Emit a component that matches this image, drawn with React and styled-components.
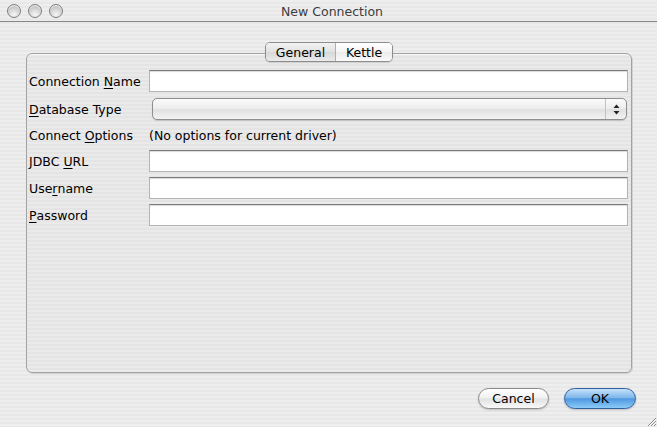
import React from 'react';
import styled, { createGlobalStyle } from 'styled-components';

const GlobalStyle = createGlobalStyle`
  html, body {
    margin: 0;
    padding: 0;
  }
  body {
    font-family: "DejaVu Sans", "Liberation Sans", sans-serif;
    font-size: 12.5px;
  }
`;

const stripes = (a, b) =>
  `repeating-linear-gradient(to bottom, ${a} 0px, ${a} 2px, ${b} 2px, ${b} 4px)`;

const Window = styled.div`
  width: 657px;
  height: 427px;
  display: flex;
  flex-direction: column;
  background: ${stripes('#eeeeee', '#e8e8e8')};
  overflow: hidden;
  position: relative;
`;

const TitleBar = styled.div`
  height: 21px;
  border-bottom: 1px solid #868686;
  display: flex;
  align-items: center;
  padding-left: 7px;
  gap: 7px;
`;

const Light = styled.span`
  width: 14px;
  height: 14px;
  border-radius: 50%;
  box-sizing: border-box;
  border: 1px solid #7f7f7f;
  background: radial-gradient(circle at 50% 80%, #f6f6f6 0%, #d4d4d4 50%, #a9a9a9 100%);
  box-shadow: inset 0 1px 1px rgba(255, 255, 255, 0.9);
`;

const Title = styled.div`
  flex: 1;
  text-align: center;
  color: #3d3d3d;
  margin-left: -63px;
  font-size: 12.5px;
  line-height: 21px;
  padding-top: 1px;
`;

const Body = styled.div`
  flex: 1;
  display: flex;
  flex-direction: column;
  padding: 20px 25px 0 26px;
`;

const TabBar = styled.div`
  display: flex;
  justify-content: center;
  margin-bottom: -9px;
  position: relative;
  z-index: 1;
`;

const Segments = styled.div`
  display: flex;
  height: 20px;
  box-sizing: border-box;
  border: 1px solid #8d8d8d;
  border-radius: 5px;
  overflow: hidden;
  box-shadow: 0 1px 1px rgba(0, 0, 0, 0.12);
`;

const Segment = styled.div`
  width: ${p => p.$w}px;
  display: flex;
  align-items: center;
  justify-content: center;
  color: #000;
  font-size: 12.5px;
  background: ${p => p.$selected
    ? 'linear-gradient(to bottom, #f2f2f2 0%, #e2e2e2 50%, #d8d8d8 51%, #eaeaea 100%)'
    : 'linear-gradient(to bottom, #ffffff 0%, #f4f4f4 50%, #ebebeb 51%, #fafafa 100%)'};
  border-left: ${p => (p.$first ? 'none' : '1px solid #b0b0b0')};
`;

const Panel = styled.div`
  height: 320px;
  box-sizing: border-box;
  border: 1px solid #a2a2a2;
  border-radius: 6px;
  box-shadow: 1px 1px 0 #d2d2d2, inset 0 1px 0 #f6f6f6;
  background: ${stripes('#eaeaea', '#e4e4e4')};
  padding: 16px 2px 0 2px;
`;

const Form = styled.div`
  display: grid;
  grid-template-columns: 120px 1fr;
  row-gap: 5px;
  grid-template-rows: 23px 22px 20px 22px 22px 22px;
`;

const Label = styled.div`
  display: flex;
  align-items: center;
  color: #000;
  white-space: nowrap;
`;

const Key = styled.span`
  text-decoration: underline;
  text-underline-offset: 2px;
`;

const Input = styled.div`
  height: 22px;
  box-sizing: border-box;
  width: 479px;
  background: #fff;
  border: 1px solid #b4b4b4;
  border-top-color: #7c7c7c;
  box-shadow: inset 0 1px 1px rgba(0, 0, 0, 0.15);
`;

const Select = styled.div`
  height: 22px;
  width: 475px;
  margin-left: 3px;
  box-sizing: border-box;
  border: 1px solid #8e8e8e;
  border-radius: 5px;
  display: flex;
  background: linear-gradient(to bottom, #fbfbfb 0%, #ececec 50%, #e0e0e0 51%, #f2f2f2 100%);
  box-shadow: 0 1px 1px rgba(0, 0, 0, 0.15);
  overflow: hidden;
`;

const SelectValue = styled.div`
  flex: 1;
`;

const Arrows = styled.div`
  width: 20px;
  border-left: 1px solid #c2c2c2;
  display: flex;
  align-items: center;
  justify-content: center;
`;

const Note = styled.div`
  display: flex;
  align-items: center;
  color: #000;
`;

const Footer = styled.div`
  display: flex;
  justify-content: flex-end;
  gap: 15px;
  padding-top: 15px;
  margin-right: -4px;
`;

const Button = styled.div`
  width: ${p => p.$w}px;
  height: 21px;
  box-sizing: border-box;
  border-radius: 11px;
  display: flex;
  align-items: center;
  justify-content: center;
  color: #000;
  border: 1px solid ${p => (p.$primary ? '#30609c' : '#8a8a8a')};
  background: ${p => p.$primary
    ? 'linear-gradient(to bottom, #c6e2fb 0%, #7fb7ea 45%, #4f98e0 52%, #8ccbf8 100%)'
    : 'linear-gradient(to bottom, #ffffff 0%, #f2f2f2 45%, #e2e2e2 52%, #f8f8f8 100%)'};
  box-shadow: 0 1px 2px rgba(0, 0, 0, 0.2);
`;

const Grip = styled.svg`
  position: absolute;
  right: 0;
  bottom: 0;
`;

export default function App() {
  return (
    <>
      <GlobalStyle />
      <Window>
        <TitleBar>
          <Light />
          <Light />
          <Light />
          <Title>New Connection</Title>
        </TitleBar>
        <Body>
          <TabBar>
            <Segments>
              <Segment $w={69} $first $selected>General</Segment>
              <Segment $w={56}>Kettle</Segment>
            </Segments>
          </TabBar>
          <Panel>
            <Form>
              <Label>Connection&nbsp;<Key>N</Key>ame</Label>
              <Input />
              <Label><Key>D</Key>atabase Type</Label>
              <Select>
                <SelectValue />
                <Arrows>
                  <svg width="7" height="11" viewBox="0 0 7 11">
                    <path d="M3.5 0.5 L6.5 4 L0.5 4 Z" fill="#222" />
                    <path d="M0.5 7 L6.5 7 L3.5 10.5 Z" fill="#222" />
                  </svg>
                </Arrows>
              </Select>
              <Label>Connect&nbsp;<Key>O</Key>ptions</Label>
              <Note>(No options for current driver)</Note>
              <Label>JDBC&nbsp;<Key>U</Key>RL</Label>
              <Input />
              <Label>Use<Key>r</Key>name</Label>
              <Input />
              <Label><Key>P</Key>assword</Label>
              <Input />
            </Form>
          </Panel>
          <Footer>
            <Button $w={71}>Cancel</Button>
            <Button $w={72} $primary>OK</Button>
          </Footer>
        </Body>
        <Grip width="12" height="12" viewBox="0 0 12 12">
          <path d="M11 3 L3 11 M11 6 L6 11 M11 9 L9 11" stroke="#8a8a8a" strokeWidth="1" />
          <path d="M11 4 L4 11 M11 7 L7 11" stroke="#fafafa" strokeWidth="1" />
        </Grip>
      </Window>
    </>
  );
}
